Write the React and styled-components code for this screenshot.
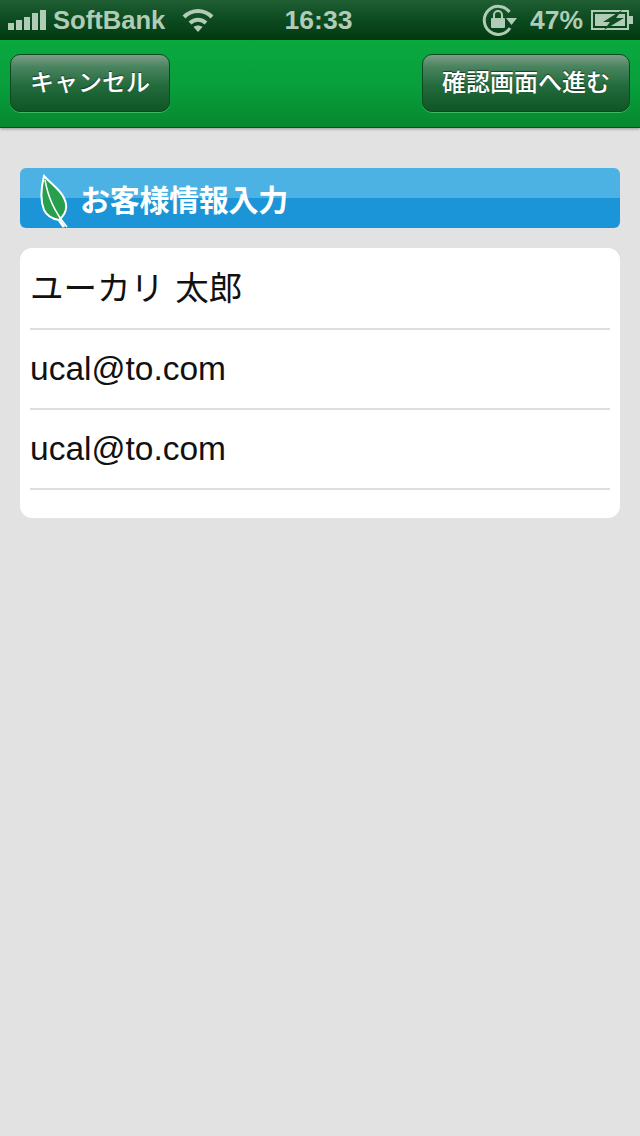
import React from "react";
import styled, { createGlobalStyle } from "styled-components";

const GlobalStyle = createGlobalStyle`
  html, body {
    margin: 0;
    padding: 0;
    background: #e2e2e2;
  }
`;

const Page = styled.div`
  width: 640px;
  height: 1136px;
  overflow: hidden;
  background: #e2e2e2;
  font-family: "Liberation Sans", "Noto Sans CJK JP", sans-serif;
`;

const StatusBar = styled.div`
  height: 40px;
  box-sizing: border-box;
  padding: 0 7px 0 8px;
  display: grid;
  grid-template-columns: 1fr auto 1fr;
  align-items: center;
  background: linear-gradient(#1f5f33 0%, #0e4c22 45%, #03390f 100%);
  color: #b0cbb6;
  font-weight: 700;
`;

const StatusLeft = styled.div`
  display: flex;
  align-items: center;
`;

const StatusRight = styled.div`
  display: flex;
  align-items: center;
  justify-content: flex-end;
`;

const Carrier = styled.span`
  margin: 0 17px 0 6px;
  font-size: 25.6px;
`;

const Clock = styled.span`
  margin-right: 4px;
  font-size: 26.5px;
`;

const Percent = styled.span`
  margin: 0 8px 0 13px;
  font-size: 26.5px;
`;

const NavBar = styled.div`
  height: 88px;
  box-sizing: border-box;
  padding: 14px 10px 16px;
  display: flex;
  justify-content: space-between;
  border-bottom: 1px solid #0d4a1d;
  box-shadow: 0 1px 3px rgba(0, 0, 0, 0.35);
  background: linear-gradient(#0aa840 0%, #08a03c 50%, #07882f 100%);
`;

const NavButton = styled.div`
  width: ${(p) => p.$width}px;
  height: 58px;
  box-sizing: border-box;
  padding-bottom: 5px;
  border-radius: 10px;
  border: 1px solid #0b4a1e;
  box-shadow: 0 1px 0 rgba(120, 220, 150, 0.5);
  background: linear-gradient(#7d9f88 0%, #4b8560 20%, #236b3c 55%, #0f5526 100%);
  color: #fff;
  font-size: 24px;
  font-weight: 500;
  display: flex;
  align-items: center;
  justify-content: center;
  text-shadow: 0 -1px 1px rgba(0, 0, 0, 0.5);
`;

const Content = styled.div`
  padding: 40px 20px 0;
`;

const SectionHeader = styled.div`
  height: 60px;
  border-radius: 6px;
  display: flex;
  align-items: center;
  padding-left: 20px;
  background: linear-gradient(#4cb2e4 0%, #4cb2e4 50%, #1b95d8 50%, #1b95d8 100%);
`;

const LeafHolder = styled.div`
  padding-top: 6px;
  display: flex;
`;

const SectionTitle = styled.span`
  margin-left: 10px;
  color: #fff;
  font-size: 30px;
  font-weight: 700;
  letter-spacing: -0.3px;
`;

const FormCard = styled.div`
  margin-top: 20px;
  height: 270px;
  box-sizing: border-box;
  padding: 2px 10px 0;
  background: #fff;
  border-radius: 12px;
`;

const FormRow = styled.div`
  height: 80px;
  box-sizing: border-box;
  padding-bottom: 1px;
  border-bottom: 2px solid #dedede;
  display: flex;
  align-items: center;
  color: #111;
  font-size: 33.5px;
  line-height: 40px;
  word-spacing: 2px;
`;

const SignalBars = () => (
  <svg width="39" height="20" viewBox="0 0 39 20" fill="currentColor">
    <rect x="0" y="13" width="6" height="7" />
    <rect x="8" y="10" width="6" height="10" />
    <rect x="16" y="7" width="6" height="13" />
    <rect x="24" y="3" width="6" height="17" />
    <rect x="32" y="0" width="6" height="20" />
  </svg>
);

const WifiIcon = () => (
  <svg width="32" height="24" viewBox="0 0 32 24" fill="none" stroke="currentColor" strokeWidth="4">
    <path d="M2 9 C10 1 22 1 30 9" />
    <path d="M8 15 C12.500 10.500 19.500 10.500 24 15" />
    <path d="M16 24 L11.500 19 C14 17 18 17 20.500 19 Z" fill="currentColor" stroke="none" />
  </svg>
);

const RotationLock = () => (
  <svg width="35" height="32" viewBox="0 0 35 32">
    <path d="M28 24 A14 14 0 1 1 27.500 8" fill="none" stroke="currentColor" strokeWidth="3" />
    <path d="M24 14 H35 L29.500 21 Z" fill="currentColor" />
    <rect x="9" y="14" width="14" height="10" rx="1" fill="currentColor" />
    <path d="M12 14 V11 A4 4 0 0 1 20 11 V14" fill="none" stroke="currentColor" strokeWidth="2" />
  </svg>
);

const BatteryIcon = () => (
  <svg width="42" height="20" viewBox="0 0 42 20">
    <rect x="1" y="1" width="36" height="18" fill="none" stroke="currentColor" strokeWidth="2" />
    <rect x="38" y="6" width="4" height="8" fill="currentColor" />
    <rect x="4" y="4" width="30" height="12" fill="currentColor" />
    <path d="M31 0 L12 12 H19 L13 20 L33 8 H25 Z" fill="#0f4c22" />
  </svg>
);

const LeafIcon = () => (
  <svg width="30" height="54" viewBox="0 0 30 54">
    <path d="M4 2 C1 14 0 26 4 36 C7 42 13 45 19 46 C26 40 28 32 24 24 C20 15 10 9 4 2 Z" fill="#279f4c" stroke="#fff" strokeWidth="2" />
    <path d="M5 6 C8 22 13 36 27 53" fill="none" stroke="#fff" strokeWidth="1.500" />
    <path d="M19 46 L24 53" fill="none" stroke="#fff" strokeWidth="3" />
  </svg>
);

const rows = ["ユーカリ 太郎", "ucal@to.com", "ucal@to.com"];

const App = () => (
  <Page>
    <GlobalStyle />
    <StatusBar>
      <StatusLeft>
        <SignalBars />
        <Carrier>SoftBank</Carrier>
        <WifiIcon />
      </StatusLeft>
      <Clock>16:33</Clock>
      <StatusRight>
        <RotationLock />
        <Percent>47%</Percent>
        <BatteryIcon />
      </StatusRight>
    </StatusBar>
    <NavBar>
      <NavButton $width={160}>キャンセル</NavButton>
      <NavButton $width={208}>確認画面へ進む</NavButton>
    </NavBar>
    <Content>
      <SectionHeader>
        <LeafHolder>
          <LeafIcon />
        </LeafHolder>
        <SectionTitle>お客様情報入力</SectionTitle>
      </SectionHeader>
      <FormCard>
        {rows.map((text, i) => (
          <FormRow key={i}>{text}</FormRow>
        ))}
      </FormCard>
    </Content>
  </Page>
);

export default App;
